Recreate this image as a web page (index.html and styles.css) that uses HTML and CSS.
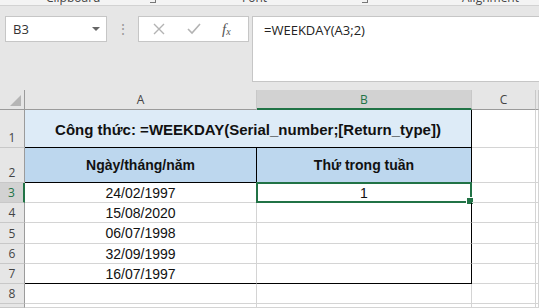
FILE: index.html
```html
<!DOCTYPE html>
<html lang="vi">
<head>
  <meta charset="UTF-8" />
  <title>WEEKDAY</title>
  <link rel="stylesheet" href="styles.css">
</head>
<body>
  <div class="ribbon">
    <span class="group-label lbl-clip">Clipboard</span>
    <span class="launcher lbl-l1"></span>
    <span class="group-label lbl-font">Font</span>
    <span class="launcher lbl-l2"></span>
    <span class="group-label lbl-align">Alignment</span>
  </div>

  <div class="formula-row">
    <div class="name-box">
      <span>B3</span>
      <span class="caret"></span>
    </div>
    <div class="grip">&#8942;</div>
    <div class="fx-buttons">
      <svg class="fx-icon" width="14" height="14" viewBox="0 0 14 14">
        <path d="M2 2 L12 12 M12 2 L2 12" stroke="#b3b3b3" stroke-width="1.4" fill="none"/>
      </svg>
      <svg class="fx-icon" width="16" height="14" viewBox="0 0 16 14">
        <path d="M2 7 L6 11 L14 2" stroke="#b3b3b3" stroke-width="1.6" fill="none"/>
      </svg>
      <span class="fx-text">f<sub>x</sub></span>
    </div>
    <div class="formula-input">=WEEKDAY(A3;2)</div>
  </div>

  <div class="sheet">
    <!-- column headers -->
    <div class="corner"><span class="corner-tri"></span></div>
    <div class="col-head">A</div>
    <div class="col-head active">B</div>
    <div class="col-head">C</div>
    <div class="col-head"></div>

    <!-- row 1 -->
    <div class="row-head">1</div>
    <div class="cell title">Công thức: =WEEKDAY(Serial_number;[Return_type])</div>
    <div class="cell"></div>
    <div class="cell"></div>

    <!-- row 2 -->
    <div class="row-head">2</div>
    <div class="cell head head-a">Ngày/tháng/năm</div>
    <div class="cell head head-b">Thứ trong tuần</div>
    <div class="cell"></div>
    <div class="cell"></div>

    <!-- rows 3 - 7 -->
    <div class="row-head active">3</div>
    <div class="cell data-a">24/02/1997</div>
    <div class="cell data-b selected">1<span class="handle"></span></div>
    <div class="cell"></div>
    <div class="cell"></div>

    <div class="row-head">4</div>
    <div class="cell data-a">15/08/2020</div>
    <div class="cell data-b"></div>
    <div class="cell"></div>
    <div class="cell"></div>

    <div class="row-head">5</div>
    <div class="cell data-a">06/07/1998</div>
    <div class="cell data-b"></div>
    <div class="cell"></div>
    <div class="cell"></div>

    <div class="row-head">6</div>
    <div class="cell data-a">32/09/1999</div>
    <div class="cell data-b"></div>
    <div class="cell"></div>
    <div class="cell"></div>

    <div class="row-head">7</div>
    <div class="cell data-a last">16/07/1997</div>
    <div class="cell data-b last"></div>
    <div class="cell"></div>
    <div class="cell"></div>

    <div class="row-head">8</div>
    <div class="cell"></div>
    <div class="cell"></div>
    <div class="cell"></div>
    <div class="cell"></div>

    <div class="row-head"></div>
    <div class="cell"></div>
    <div class="cell"></div>
    <div class="cell"></div>
    <div class="cell"></div>
  </div>
</body>
</html>
```

FILE: styles.css
```css
/* Global */
body {
  margin: 0;
  background-color: #e6e6e6;
  font-family: "Open Sans", "Noto Sans", sans-serif;
  width: 539px;
  height: 308px;
  overflow: hidden;
}

/* Ribbon strip (cut off at the top) */
.ribbon {
  position: relative;
  height: 5px;
  background-color: #f3f3f3;
  border-bottom: 1px solid #d2d2d2;
  overflow: hidden;
}
.group-label {
  position: absolute;
  top: -11px;
  font-size: 12px;
  color: #444;
}
.lbl-clip { left: 46px; }
.lbl-font { left: 242px; }
.lbl-align { left: 462px; }
.launcher {
  position: absolute;
  top: -6px;
  width: 5px;
  height: 8px;
  border-right: 1px solid #777;
  border-bottom: 1px solid #777;
}
.lbl-l1 { left: 150px; }
.lbl-l2 { left: 362px; }

/* Formula bar */
.formula-row {
  display: flex;
  align-items: flex-start;
  padding: 10px 0 0 5px;
  height: 66px;
}
.name-box {
  box-sizing: border-box;
  width: 102px;
  height: 26px;
  background-color: #fff;
  border: 1px solid #c6c6c6;
  display: flex;
  align-items: center;
  justify-content: space-between;
  padding: 0 6px 0 7px;
  font-size: 13px;
  color: #333;
}
.caret {
  width: 0;
  height: 0;
  border-left: 4px solid transparent;
  border-right: 4px solid transparent;
  border-top: 4px solid #666;
}
.grip {
  width: 31px;
  text-align: center;
  color: #9a9a9a;
  font-size: 14px;
  line-height: 26px;
}
.fx-buttons {
  box-sizing: border-box;
  width: 111px;
  height: 26px;
  background-color: #fff;
  border: 1px solid #c6c6c6;
  display: flex;
  align-items: center;
  padding-left: 13px;
  gap: 20px;
}
.fx-text {
  font-family: "Liberation Serif", serif;
  font-style: italic;
  font-size: 15px;
  color: #555;
}
.fx-text sub {
  font-size: 10px;
  vertical-align: -1px;
}
.formula-input {
  box-sizing: border-box;
  margin-left: 3px;
  flex: 1;
  height: 66px;
  background-color: #fff;
  border: 1px solid #c6c6c6;
  border-right: none;
  padding: 4px 0 0 11px;
  font-size: 13px;
  color: #222;
}

/* Sheet grid */
.sheet {
  margin-top: 8px;
  display: grid;
  grid-template-columns: 25px 232px 215px 64px 3px;
  grid-template-rows: 20px 38px 35px 20px 20px 21px 20px 20px 20px 4px;
  background-color: #fff;
  font-family: "Liberation Sans", Arial, sans-serif;
}
.corner,
.col-head,
.row-head {
  box-sizing: border-box;
  background-color: #e6e6e6;
  color: #444;
  font-family: "Open Sans", sans-serif;
  font-size: 12px;
  display: flex;
  align-items: center;
  justify-content: center;
}
.corner {
  position: relative;
  border-right: 1px solid #9b9b9b;
  border-bottom: 1px solid #9b9b9b;
}
.corner-tri {
  position: absolute;
  right: 3px;
  bottom: 3px;
  width: 0;
  height: 0;
  border-left: 11px solid transparent;
  border-bottom: 11px solid #b5b5b5;
}
.col-head {
  border-right: 1px solid #c8c8c8;
  border-bottom: 1px solid #9b9b9b;
}
.col-head.active {
  background-color: #d2d2d2;
  color: #217346;
  border-bottom: 2px solid #217346;
}
.row-head {
  border-right: 1px solid #9b9b9b;
  border-bottom: 1px solid #c8c8c8;
  align-items: flex-end;
  padding-bottom: 1px;
}
.row-head.active {
  background-color: #d2d2d2;
  color: #217346;
  border-right: 2px solid #217346;
}

.cell {
  box-sizing: border-box;
  position: relative;
  border-right: 1px solid #d4d4d4;
  border-bottom: 1px solid #d4d4d4;
  font-size: 14px;
  color: #111;
  display: flex;
  align-items: center;
  justify-content: center;
}
.title {
  grid-column: 2 / span 2;
  background-color: #ddebf7;
  border: 1px solid #000;
  border-left: none;
  border-top: none;
  font-weight: bold;
  font-size: 15px;
  padding-top: 2px;
}
.head {
  background-color: #bdd7ee;
  border-bottom: 1px solid #000;
  font-weight: bold;
  font-size: 14px;
}
.head-a { border-right: 1px solid #000; }
.head-b { border-right: 1px solid #000; }
.data-b { border-right: 1px solid #000; }
.last { border-bottom: 1px solid #000; }

.selected {
  border: 2px solid #217346;
  margin: -1px 0 0 -1px;
}
.handle {
  position: absolute;
  right: -4px;
  bottom: -4px;
  width: 6px;
  height: 6px;
  background-color: #217346;
  border: 1px solid #fff;
}
```
